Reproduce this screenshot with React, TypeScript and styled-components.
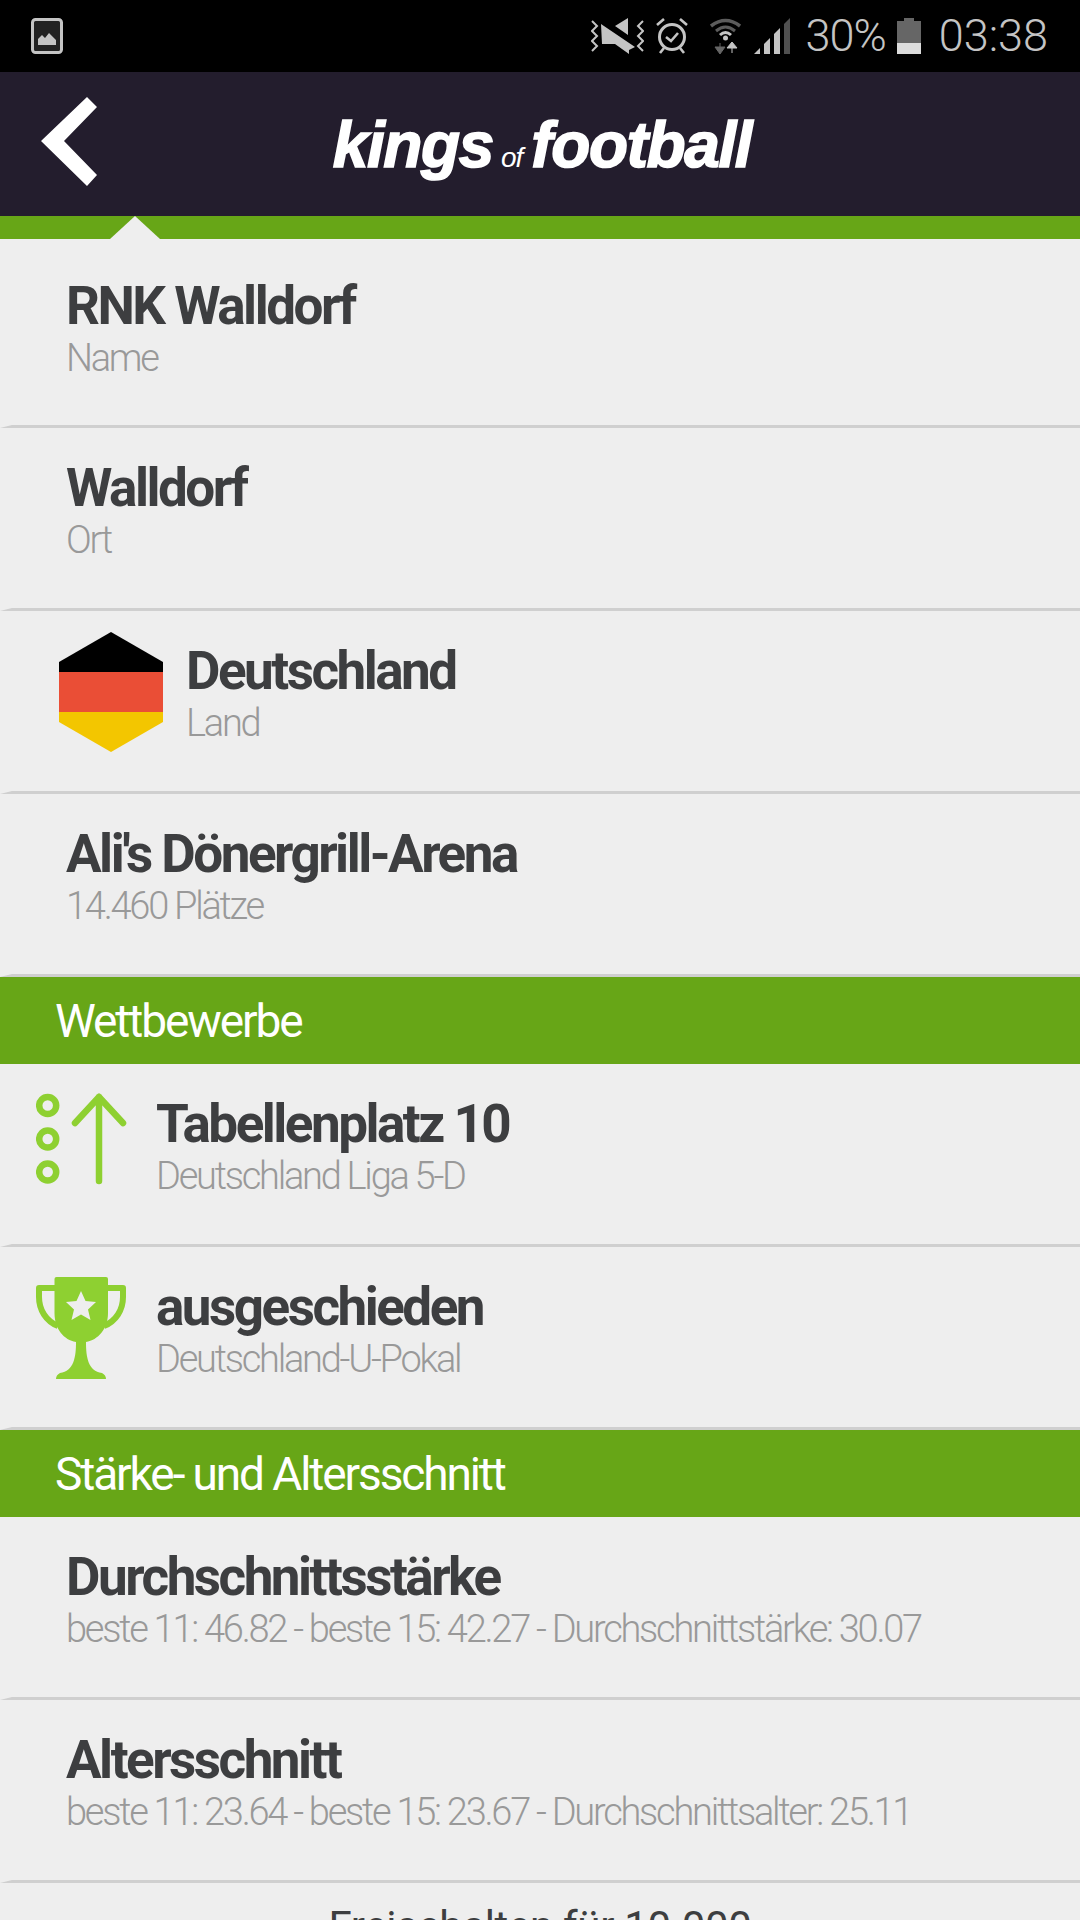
import React from "react";
import styled, { createGlobalStyle } from "styled-components";

const GlobalStyle = createGlobalStyle`
  html, body {
    margin: 0;
    padding: 0;
    background: #eeeeee;
  }
  body {
    font-family: Roboto, "Liberation Sans", sans-serif;
  }
`;

const Screen = styled.div`
  width: 1080px;
  height: 1920px;
  overflow: hidden;
  background: #eeeeee;
`;

const StatusBar = styled.div`
  height: 72px;
  background: #000;
  display: flex;
  align-items: center;
  justify-content: space-between;
  padding: 0 32px 0 31px;
  box-sizing: border-box;
  color: #c4c4c4;
`;

const StatusRight = styled.div`
  display: flex;
  align-items: center;
`;

const StatusText = styled.span<{ $left: number; $spacing?: number }>`
  font-size: 45px;
  font-weight: 300;
  line-height: 72px;
  margin-left: ${(p) => p.$left}px;
  letter-spacing: ${(p) => p.$spacing ?? 0}px;
`;

const StatusIcon = styled.svg<{ $left: number }>`
  display: block;
  flex: none;
  margin-left: ${(p) => p.$left}px;
`;

const Header = styled.div`
  height: 144px;
  background: #231d2d;
  position: relative;
  display: flex;
  align-items: center;
  justify-content: center;
`;

const BackIcon = styled.svg`
  position: absolute;
  left: 41px;
  top: 25px;
`;

const Logo = styled.div`
  display: flex;
  align-items: baseline;
  color: #fff;
  font-family: "Liberation Sans", sans-serif;
  font-style: italic;
  font-weight: 700;
  font-size: 64px;
  letter-spacing: -1.4px;
  line-height: 1;
  margin-left: 4px;
  margin-top: 2px;
  -webkit-text-stroke: 1.6px #fff;
`;

const LogoOf = styled.span`
  font-size: 28px;
  font-weight: 400;
  letter-spacing: -1px;
  margin: 0 9px 0 8px;
  -webkit-text-stroke: 0;
`;

const GreenStrip = styled.div`
  height: 23px;
  background: #67a617;
  position: relative;
`;

const Notch = styled.div`
  position: absolute;
  left: 110px;
  bottom: 0;
  width: 0;
  height: 0;
  border-left: 25px solid transparent;
  border-right: 25px solid transparent;
  border-bottom: 23px solid #eeeeee;
`;

const Row = styled.div<{ $height?: number; $indent: number }>`
  height: ${(p) => p.$height ?? 183}px;
  box-sizing: border-box;
  display: flex;
  padding-left: ${(p) => p.$indent - 12}px;
  border-left: 12px solid transparent;
  border-bottom: 3px solid #cfcfcf;
`;

const IconSlot = styled.div<{ $width: number; $top: number }>`
  width: ${(p) => p.$width}px;
  flex: none;
  padding-top: ${(p) => p.$top}px;
`;

const TextBlock = styled.div<{ $top?: number }>`
  padding-top: ${(p) => p.$top ?? 32}px;
`;

const Title = styled.div`
  font-size: 53px;
  font-weight: 700;
  line-height: 56px;
  letter-spacing: -2.5px;
  color: #3d3e40;
  white-space: nowrap;
`;

const Sub = styled.div`
  margin-top: 3px;
  font-size: 38px;
  font-weight: 300;
  line-height: 42px;
  letter-spacing: -2.25px;
  color: #999999;
  white-space: nowrap;
`;

const SectionBar = styled.div`
  height: 87px;
  background: #67a617;
  color: #fff;
  font-size: 46px;
  font-weight: 400;
  letter-spacing: -2.1px;
  line-height: 89px;
  padding-left: 55px;
`;

const Unlock = styled.div`
  text-align: center;
  font-size: 42px;
  font-weight: 400;
  line-height: 50px;
  letter-spacing: -0.3px;
  color: #3d3e40;
  padding-top: 19px;
`;

const Drawing = styled.svg`
  display: block;
`;

const FlagIcon = () => (
  <Drawing width="104" height="120" viewBox="0 0 104 120">
    <polygon points="52,0 104,30 104,40 0,40 0,30" fill="#000" />
    <rect x="0" y="40" width="104" height="40" fill="#ea4e36" />
    <polygon points="0,80 104,80 104,90 52,120 0,90" fill="#f3c600" />
  </Drawing>
);

const RankIcon = () => (
  <Drawing width="92" height="92" viewBox="0 0 92 92">
    <g fill="none" stroke="#8ed031" strokeWidth="6.5">
      <circle cx="11.7" cy="12.5" r="8.5" />
      <circle cx="11.7" cy="46" r="8.5" />
      <circle cx="11.7" cy="79" r="8.5" />
    </g>
    <path
      d="M63 4V88M63 4L39 30M63 4L87 30"
      fill="none"
      stroke="#8ed031"
      strokeWidth="6.5"
      strokeLinecap="round"
      strokeLinejoin="round"
    />
  </Drawing>
);

const CupIcon = () => (
  <Drawing width="90" height="102" viewBox="0 0 90 102">
    <path
      d="M19 11H3V20C3 33 10 44 22 49M71 11H87V20C87 33 80 44 68 49"
      fill="none"
      stroke="#8ed031"
      strokeWidth="6"
      strokeLinejoin="round"
    />
    <path
      d="M18.500 2Q18.500 0 20.500 0H70Q72 0 72 2V36C72 52 62 63 50 65C50 80 52 94 66 96Q70 98 70 102H20Q20 98 24 96C38 94 40 80 40 65C28 63 18.500 52 18.500 36Z"
      fill="#8ed031"
    />
    <polygon
      points="45,14 49.500,24 60,25 52,32.500 54.500,43 45,37.500 35.500,43 38,32.500 30,25 40.500,24"
      fill="#eeeeee"
    />
  </Drawing>
);

export default function App() {
  return (
    <Screen>
      <GlobalStyle />
      <StatusBar>
        <Drawing width="32" height="36" viewBox="0 0 32 36">
          <rect x="1.500" y="1.500" width="29" height="33" rx="3" fill="#222" stroke="#c4c4c4" strokeWidth="3" />
          <path d="M7 27V21L11 17L14 20L18 15L25 22V27Z" fill="#c4c4c4" />
        </Drawing>
        <StatusRight>
          <StatusIcon $left={0} width="53" height="36" viewBox="0 0 53 36">
            <path d="M1 3L6 8L1 13L6 18L1 23L6 28L1 33M52 3L47 8L52 13L47 18L52 23L47 28L52 33" fill="none" stroke="#c4c4c4" strokeWidth="2" />
            <path d="M10 6L44 29L38 32V36L24 26H11Z M24 8L37 0V17Z" fill="#c4c4c4" />
          </StatusIcon>
          <StatusIcon $left={12} width="32" height="36" viewBox="0 0 32 36">
            <circle cx="16" cy="19" r="12.500" fill="none" stroke="#c4c4c4" strokeWidth="3" />
            <path d="M10 19L15 23L22 15" fill="none" stroke="#c4c4c4" strokeWidth="2.600" />
            <path d="M1 7L8 1M31 7L24 1M8 30L4 35M24 30L28 35" fill="none" stroke="#c4c4c4" strokeWidth="2.600" />
          </StatusIcon>
          <StatusIcon $left={22} width="31" height="36" viewBox="0 0 31 36">
            <path d="M1 8Q15.500 -3 30 8" fill="none" stroke="#5c5c5c" strokeWidth="3.500" />
            <path d="M6 13Q15.500 5 25 13" fill="none" stroke="#5c5c5c" strokeWidth="3" />
            <path d="M10 17Q15.500 12 21 17" fill="none" stroke="#c4c4c4" strokeWidth="3" />
            <circle cx="15.500" cy="20" r="2.500" fill="#c4c4c4" />
            <path d="M10 25V35M5 29L10 36L15 29Z" fill="#666" stroke="#666" strokeWidth="1" />
            <path d="M22 35V25M17 30L22 24L27 30Z" fill="#c4c4c4" stroke="#c4c4c4" strokeWidth="1" />
          </StatusIcon>
          <StatusIcon $left={13} width="36" height="36" viewBox="0 0 36 36">
            <polygon points="0,36 6,30 6,36" fill="#c4c4c4" />
            <polygon points="10,36 10,26 16,20 16,36" fill="#c4c4c4" />
            <polygon points="20,36 20,16 26,10 26,36" fill="#c4c4c4" />
            <polygon points="30,36 30,6 36,0 36,36" fill="#505050" />
          </StatusIcon>
          <StatusText $left={16} $spacing={-1}>30%</StatusText>
          <StatusIcon $left={11} width="24" height="36" viewBox="0 0 24 36">
            <path d="M0 3H7V0H17V3H24V25H0Z" fill="#666" />
            <rect y="25" width="24" height="11" fill="#dcdcdc" />
          </StatusIcon>
          <StatusText $left={18}>03:38</StatusText>
        </StatusRight>
      </StatusBar>

      <Header>
        <BackIcon width="56" height="89" viewBox="0 0 56 89">
          <polygon points="46,0 56,10 23,44 56,78 46,89 0,44" fill="#fff" />
        </BackIcon>
        <Logo>
          kings<LogoOf>of</LogoOf>football
        </Logo>
      </Header>
      <GreenStrip>
        <Notch />
      </GreenStrip>

      <Row $height={189} $indent={66}>
        <TextBlock $top={39}>
          <Title>RNK Walldorf</Title>
          <Sub>Name</Sub>
        </TextBlock>
      </Row>
      <Row $indent={66}>
        <TextBlock>
          <Title>Walldorf</Title>
          <Sub>Ort</Sub>
        </TextBlock>
      </Row>
      <Row $indent={59}>
        <IconSlot $width={127} $top={21}>
          <FlagIcon />
        </IconSlot>
        <TextBlock>
          <Title>Deutschland</Title>
          <Sub>Land</Sub>
        </TextBlock>
      </Row>
      <Row $indent={66}>
        <TextBlock>
          <Title>Ali's Dönergrill-Arena</Title>
          <Sub>14.460 Plätze</Sub>
        </TextBlock>
      </Row>

      <SectionBar>Wettbewerbe</SectionBar>
      <Row $indent={36}>
        <IconSlot $width={120} $top={29}>
          <RankIcon />
        </IconSlot>
        <TextBlock>
          <Title>Tabellenplatz 10</Title>
          <Sub>Deutschland Liga 5-D</Sub>
        </TextBlock>
      </Row>
      <Row $indent={36}>
        <IconSlot $width={120} $top={30}>
          <CupIcon />
        </IconSlot>
        <TextBlock>
          <Title>ausgeschieden</Title>
          <Sub>Deutschland-U-Pokal</Sub>
        </TextBlock>
      </Row>

      <SectionBar>Stärke- und Altersschnitt</SectionBar>
      <Row $indent={66}>
        <TextBlock>
          <Title>Durchschnittsstärke</Title>
          <Sub>beste 11: 46.82 - beste 15: 42.27 - Durchschnittstärke: 30.07</Sub>
        </TextBlock>
      </Row>
      <Row $indent={66}>
        <TextBlock>
          <Title>Altersschnitt</Title>
          <Sub>beste 11: 23.64 - beste 15: 23.67 - Durchschnittsalter: 25.11</Sub>
        </TextBlock>
      </Row>
      <Unlock>Freischalten für 10.000</Unlock>
    </Screen>
  );
}
